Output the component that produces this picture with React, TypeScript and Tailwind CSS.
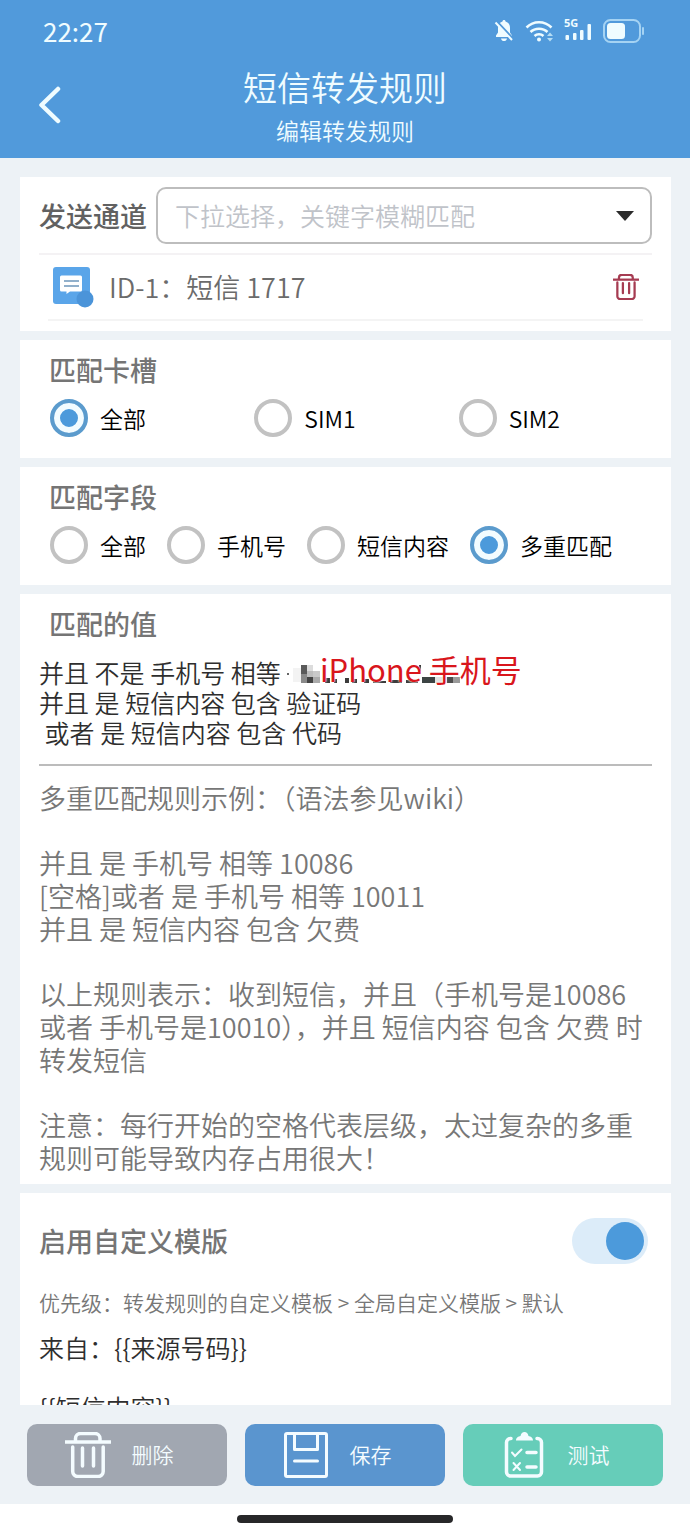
import { useState } from 'react';

const fontClass = 'font-["Noto_Sans_CJK_SC","Noto_Sans",sans-serif] font-[350]';
const cardClass = 'shrink-0 bg-white';
const titleClass = 'text-[27px] leading-9 font-medium text-[#757575]';

const SIM_OPTIONS = ['全部', 'SIM1', 'SIM2'];
const FIELD_OPTIONS = ['全部', '手机号', '短信内容', '多重匹配'];

const EXAMPLES = [
  '多重匹配规则示例：（语法参见wiki）',
  '并且 是 手机号 相等 10086\n[空格]或者 是 手机号 相等 10011\n并且 是 短信内容 包含 欠费',
  '以上规则表示：收到短信，并且（手机号是10086 或者 手机号是10010），并且 短信内容 包含 欠费 时转发短信',
  '注意：每行开始的空格代表层级，太过复杂的多重规则可能导致内存占用很大！',
];

function TrashIcon({ className, strokeWidth }: { className: string; strokeWidth: number }) {
  return (
    <svg viewBox="0 0 46 46" className={className} fill="none" stroke="currentColor" strokeWidth={strokeWidth} aria-hidden="true">
      <path d="M0 10H46" />
      <path d="M10.5 10V6.5a5 5 0 0 1 5-5h14.5a5 5 0 0 1 5 5V10" />
      <path d="M7.7 15v24.5a5 5 0 0 0 5 5h20.5a5 5 0 0 0 5-5V15" strokeLinecap="round" />
      <path d="M17.5 16V34M28.5 16V34" strokeLinecap="round" />
    </svg>
  );
}

function SaveIcon() {
  return (
    <svg viewBox="0 0 46 46" className="size-[46px]" fill="none" stroke="currentColor" strokeWidth="3" aria-hidden="true">
      <rect x="2.5" y="1.5" width="41" height="43" rx="1.5" />
      <path d="M11.5 2v15.5H34.5V2" strokeLinejoin="round" />
      <path d="M11.5 29H34.5" strokeLinecap="round" />
    </svg>
  );
}

function ChecklistIcon() {
  return (
    <svg viewBox="0 0 46 46" className="size-[46px]" fill="none" stroke="currentColor" strokeLinecap="round" aria-hidden="true">
      <path d="M10 6.5H9.5a4 4 0 0 0-4 4V40a4 4 0 0 0 4 4h27a4 4 0 0 0 4-4V10.5a4 4 0 0 0-4-4H36" strokeWidth="3.5" />
      <path d="M15 8.5c0-3 2.500-4 4.500-4.500C20 1.500 21.500 0 23.500 0S27 1.500 27.500 4c2 .5 4.500 1.500 4.500 4.500Z" fill="currentColor" stroke="none" />
      <path d="m11 20.5 3 3.500 6.500-6.500M12.500 31l6.500 7M19 31l-6.500 7" strokeWidth="2" />
      <path d="M26 20.5h9M26 35h9" strokeWidth="3.5" />
    </svg>
  );
}

function StatusIcons() {
  return (
    <div className="flex items-center gap-[11px] text-[#effcff]">
      <svg viewBox="0 0 20 24" className="h-6 w-5" aria-hidden="true">
        <path d="M10 1c1 0 1.500.6 1.500 1.500C14.500 3.300 16 5.700 16 9v4.500l2 3V18H2v-1.500l2-3V9c0-3.300 1.500-5.700 4.500-6.500C8.500 1.600 9 1 10 1ZM7 19.500h6c-.5 2-1.500 2.500-3 2.500s-2.500-.5-3-2.500Z" fill="currentColor" />
        <path d="M3 2.5 19.5 20" stroke="#519adb" strokeWidth="2" />
        <path d="M1.5 3.5 18 21" stroke="currentColor" strokeWidth="2" />
      </svg>
      <svg viewBox="0 0 28 24" className="h-6 w-7" fill="none" stroke="currentColor" strokeWidth="2.5" aria-hidden="true">
        <path d="M1.5 8.500c7-7 18-7 25 0M5.500 13c4.500-4.500 12.500-4.500 17 0M9.500 17c2.500-2.300 6.500-2.300 9 0" />
        <circle cx="14" cy="20.5" r="2" fill="currentColor" stroke="none" />
        <path d="m25 13.500 3 3.500h-6ZM25 22.500l3-3.500h-6Z" fill="#b5ddf5" stroke="none" />
      </svg>
      <svg viewBox="0 -5 28 38" className="h-[38px] w-7 font-['Noto_Sans',sans-serif] text-[11px] font-bold" fill="currentColor" aria-label="5G">
        <text x="0" y="10">5G</text>
        <rect x="1.5" y="18" width="3.5" height="5" rx="1" />
        <rect x="9" y="16" width="3.5" height="7" rx="1" />
        <rect x="16" y="13" width="3.5" height="10" rx="1" />
        <rect x="23.5" y="7" width="3.5" height="16" rx="1" />
      </svg>
      <svg viewBox="0 0 42 24" className="h-6 w-[42px]" fill="none" aria-hidden="true">
        <rect x="1" y="1" width="36" height="22" rx="6.5" stroke="#a5d3f3" strokeWidth="2" />
        <rect x="4" y="4" width="18" height="16" rx="3.5" fill="currentColor" />
        <path d="M40 9v6" stroke="#a5d3f3" strokeWidth="2" strokeLinecap="round" />
      </svg>
    </div>
  );
}

interface RadioProps {
  name: string;
  label: string;
  checked: boolean;
  onSelect: (label: string) => void;
}

function Radio({ name, label, checked, onSelect }: RadioProps) {
  return (
    <label className="flex items-center gap-3 text-[23px] leading-8 text-black">
      <input
        type="radio"
        name={name}
        value={label}
        checked={checked}
        onChange={() => onSelect(label)}
        className="size-[38px] shrink-0 appearance-none rounded-full border-4 border-[#c2c2c2] bg-clip-padding checked:border-[#5b9bcd] checked:bg-[#4c9adb] checked:shadow-[inset_0_0_0_6px_#f3fcff]"
      />
      {label}
    </label>
  );
}

export default function App() {
  const [sim, setSim] = useState('全部');
  const [field, setField] = useState('多重匹配');
  const [customTemplate, setCustomTemplate] = useState(true);

  const actionClass =
    'flex h-[62px] flex-1 items-center justify-center gap-[21px] rounded-[10px] pr-4 text-[21px] font-[350] text-[#f4fcff]';

  return (
    <div className={`flex h-screen flex-col bg-[#edf2f6] ${fontClass}`}>
      <header className="shrink-0 bg-[#519adb] text-[#effcff]">
        <div className="flex h-16 items-center justify-between pr-[45px] pb-0.5 pl-[43px]">
          <span className="text-[26px] leading-8 font-normal">22:27</span>
          <StatusIcons />
        </div>
        <div className="grid grid-cols-[80px_1fr_80px] items-center pb-3">
          <button type="button" aria-label="返回" className="pl-[38px]">
            <svg viewBox="0 0 24 38" className="h-[38px] w-6" fill="none" stroke="currentColor" strokeWidth="4.5" strokeLinecap="round" strokeLinejoin="round">
              <path d="M20 3 3.5 19 20 35" />
            </svg>
          </button>
          <div className="pt-[3px] text-center">
            <h1 className="text-[34px] leading-10 font-[350]">短信转发规则</h1>
            <p className="mt-[7px] text-[23px] leading-8">编辑转发规则</p>
          </div>
        </div>
      </header>

      <main className="flex min-h-0 flex-1 flex-col gap-[9px] overflow-y-auto pt-[19px] pr-[19px] pl-5 [scrollbar-width:none]">
        {/* Sender */}
        <section className={`${cardClass} px-[19px] py-2.5`}>
          <div className="flex items-center gap-[9px]">
            <label htmlFor="sender" className="text-[27px] leading-9 font-medium text-[#616161]">发送通道</label>
            <div className="relative flex-1">
              <select
                id="sender"
                defaultValue=""
                className="h-[57px] w-full appearance-none rounded-[10px] border-2 border-[#bdbdbd] bg-white pl-[17px] text-[25px] font-[350] text-[#c0c3c9]"
              >
                <option value="">下拉选择，关键字模糊匹配</option>
              </select>
              <svg viewBox="0 0 18 10" className="pointer-events-none absolute top-6 right-[18px] h-2.5 w-[18px]" fill="#2b2b2b" aria-hidden="true">
                <path d="M0 0h18L9 10Z" />
              </svg>
            </div>
          </div>
          <div className="mt-[9px] border-t-2 border-[#f4f2f4] px-[9px]">
            <div className="flex h-[66px] items-center border-b-2 border-[#f4f4f4]">
              <svg viewBox="0 0 42 42" className="ml-1 size-[42px]" aria-hidden="true">
                <rect x="1" y="1" width="37" height="37" rx="3" fill="#5aa5e9" />
                <circle cx="33" cy="33" r="8.5" fill="#4b94d9" />
                <path d="M9.500 9.500h19a1.500 1.500 0 0 1 1.500 1.500v13a1.500 1.500 0 0 1-1.500 1.500H18L14.500 28v-2.500h-5A1.500 1.500 0 0 1 8 24V11a1.500 1.500 0 0 1 1.500-1.500Z" fill="#fff" />
                <path d="M12 15h15M12 20h15" stroke="#6d96ba" strokeWidth="1.5" />
              </svg>
              <span className="ml-[15px] flex-1 text-[27px] leading-9 text-[#6b6b6b]">ID-1：短信 1717</span>
              <button type="button" aria-label="删除通道" className="mr-1 text-[#a63c52]">
                <TrashIcon className="size-[26px]" strokeWidth={4} />
              </button>
            </div>
          </div>
        </section>

        {/* SIM slot */}
        <section className={`${cardClass} pt-3 pr-2 pb-[21px] pl-[29px]`}>
          <h2 className={titleClass}>匹配卡槽</h2>
          <div className="mt-[11px] grid grid-cols-3 pl-px">
            {SIM_OPTIONS.map((o) => (
              <Radio key={o} name="sim" label={o} checked={sim === o} onSelect={setSim} />
            ))}
          </div>
        </section>

        {/* Field */}
        <section className={`${cardClass} pt-3 pr-2 pb-[21px] pl-[29px]`}>
          <h2 className={titleClass}>匹配字段</h2>
          <div className="mt-[11px] flex gap-[21px] pl-px">
            {FIELD_OPTIONS.map((o) => (
              <Radio key={o} name="field" label={o} checked={field === o} onSelect={setField} />
            ))}
          </div>
        </section>

        {/* Value */}
        <section className={`${cardClass} px-[19px] pt-3 pb-2.5`}>
          <label htmlFor="match-value" className={`block pl-2.5 ${titleClass}`}>匹配的值</label>
          <div className="relative mt-[15px]">
            <textarea
              id="match-value"
              rows={3}
              defaultValue={'并且 不是 手机号 相等 \n并且 是 短信内容 包含 验证码\n 或者 是 短信内容 包含 代码'}
              className="block w-full resize-none overflow-hidden border-b-2 border-[#bcbcbc] pb-[17px] text-[25px] leading-[30px] font-[350] text-[#2e2e2e]"
            />
            <div className="pointer-events-none absolute -top-1.5 left-[246px] h-9">
              {/* Masked phone number */}
              <svg viewBox="0 0 176 36" className="absolute top-0 left-0 h-9 w-44" aria-hidden="true">
                <path d="M2 22h2v2H2z" fill="#666" />
                <path d="M8 17h9v14H8z" fill="#f3f3f3" />
                <path d="M16 14h6v9h-6z" fill="#5a5a5a" />
                <path d="M16 23h6v9h-6z" fill="#8a8a8a" />
                <path d="M22 14h6v6h-6z" fill="#dcdcdc" />
                <path d="M22 20h6v6h-6z" fill="#bdbdbd" />
                <path d="M22 26h6v6h-6z" fill="#444" />
                <path d="M28 20h7v6h-7z" fill="#c9c9c9" />
                <path d="M28 26h7v6h-7z" fill="#aaa" />
                <path d="M40 27h5v5h-5zM49 28h3v4h-3zM60 27h4v5h-4zM67 28h5v4h-5zM79 28h5v4h-5zM88 30h13v2H88zM105 29h12v3h-12zM121 29h12v3h-12z" fill="#3c3c3c" />
                <path d="M134 14h2v6h-2z" fill="#333" />
                <path d="M137 26h13v6h-13z" fill="#3c4444" />
                <path d="M150 26h12v6h-12z" fill="#e2e2e2" />
                <path d="M162 26h6v6h-6z" fill="#4d4d4d" />
                <path d="M168 26h7v6h-7z" fill="#9a9a9a" />
              </svg>
              <span className="relative ml-[35px] text-[31px] leading-9 font-normal whitespace-nowrap text-[#d9161c] [text-shadow:0_0_2px_#fff,0_0_2px_#fff]">
                iPhone 手机号
              </span>
            </div>
          </div>
          <div className="mt-[15px] flex flex-col gap-8 text-[27px] leading-[33px] text-[#777]">
            {EXAMPLES.map((text) => (
              <p key={text} className="whitespace-pre-line">{text}</p>
            ))}
          </div>
        </section>

        {/* Custom template */}
        <section className={`${cardClass} px-[19px] pt-[25px]`}>
          <div className="flex items-center justify-between pr-1">
            <label htmlFor="custom-template" className={titleClass}>启用自定义模版</label>
            <input
              id="custom-template"
              type="checkbox"
              role="switch"
              checked={customTemplate}
              onChange={(e) => setCustomTemplate(e.target.checked)}
              className="flex h-[46px] w-[76px] appearance-none items-center rounded-full bg-gray-200 px-1 before:size-[38px] before:rounded-full before:bg-white checked:justify-end checked:bg-[#dcecf9] checked:before:bg-[#4c9adb]"
            />
          </div>
          <p className="mt-[23px] text-[21px] leading-[30px] text-[#777]">
            优先级：转发规则的自定义模板 &gt; 全局自定义模版 &gt; 默认
          </p>
          <textarea
            aria-label="自定义模版"
            rows={4}
            defaultValue={'来自：{{来源号码}}\n\n{{短信内容}}'}
            className="mt-[15px] block w-full resize-none overflow-hidden text-[25px] leading-[30px] font-[350] text-[#2e2e2e]"
          />
        </section>
      </main>

      <footer className="shrink-0">
        <div className="flex gap-[18px] px-[27px] pt-[19px] pb-[18px]">
          <button type="button" className={`${actionClass} bg-[#a1a7b1]`}>
            <TrashIcon className="size-[46px]" strokeWidth={3.5} />
            删除
          </button>
          <button type="button" className={`${actionClass} bg-[#5a95cf]`}>
            <SaveIcon />
            保存
          </button>
          <button type="button" className={`${actionClass} bg-[#66cdb9]`}>
            <ChecklistIcon />
            测试
          </button>
        </div>
        <div className="flex h-[29px] items-center justify-center bg-white">
          <div className="h-2 w-[216px] rounded-full bg-[#272729]" />
        </div>
      </footer>
    </div>
  );
}
